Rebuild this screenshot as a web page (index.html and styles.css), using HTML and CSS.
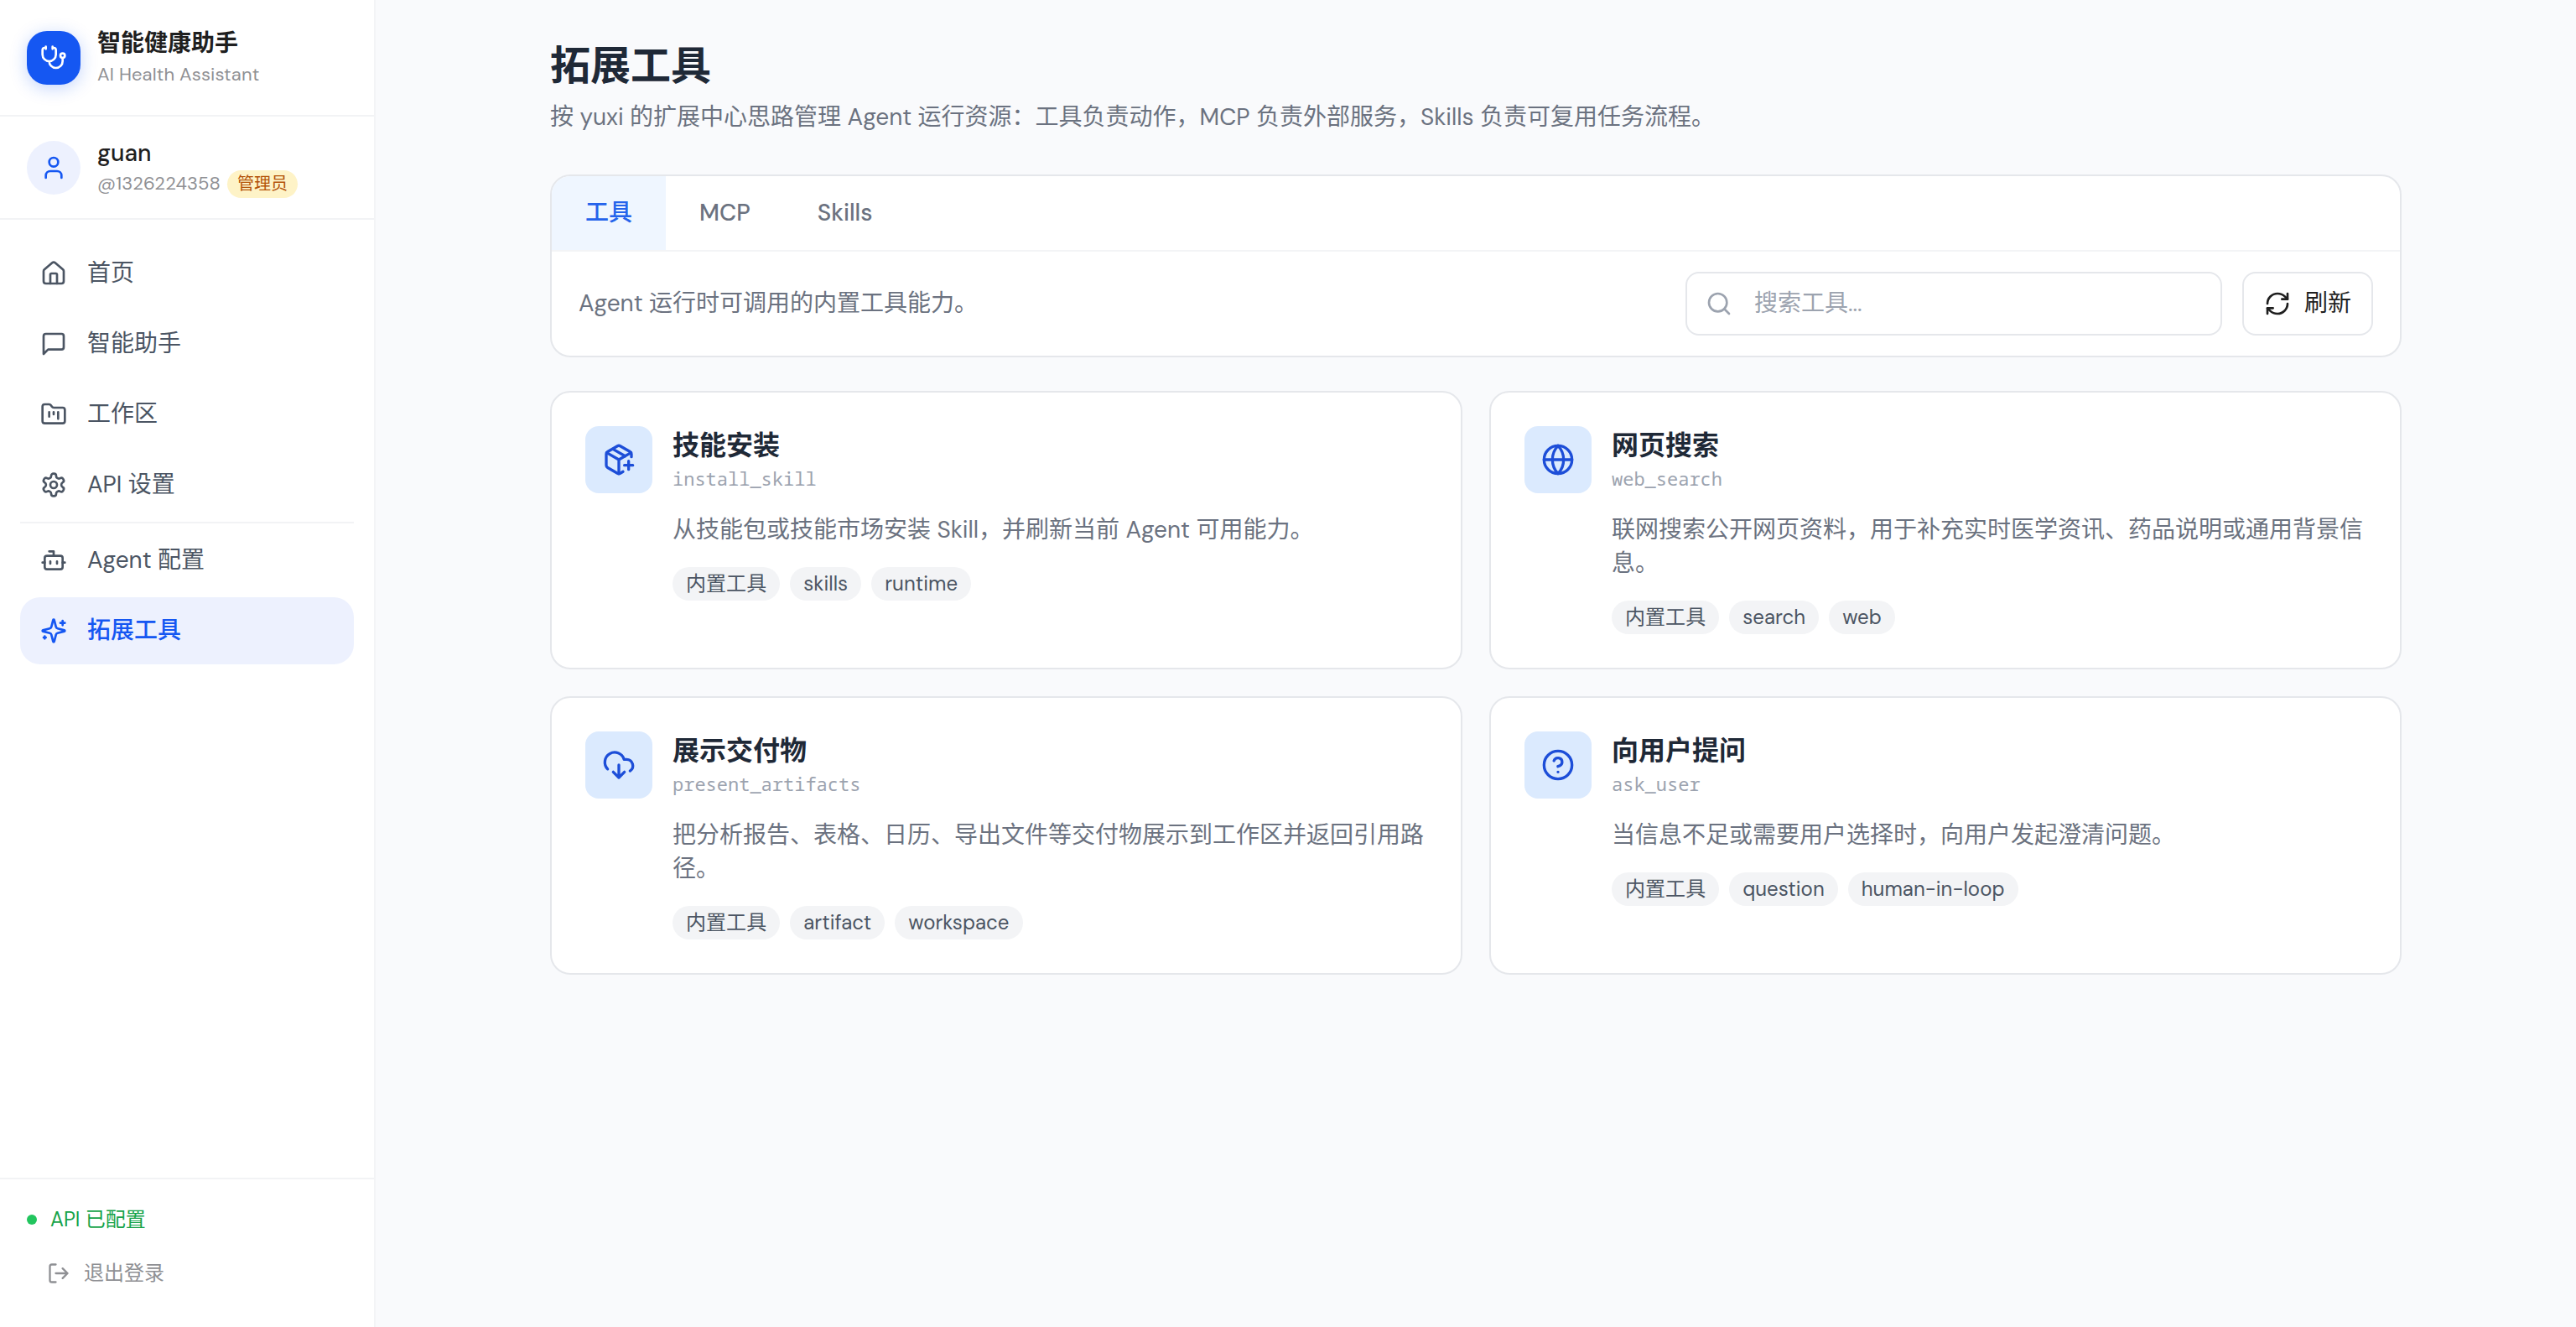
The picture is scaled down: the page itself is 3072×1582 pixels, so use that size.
FILE: index.html
```html
<!DOCTYPE html>
<html lang="zh-CN">
<head>
<meta charset="utf-8">
<title>拓展工具 - 智能健康助手</title>
<link rel="stylesheet" href="styles.css">
</head>
<body>
<div class="app">
  <aside class="sidebar">
    <header class="brand">
      <div class="brand-logo">
        <svg class="icon" viewBox="0 0 24 24"><path d="M11 2v2M5 2v2M5 3H4a2 2 0 0 0-2 2v4a6 6 0 0 0 12 0V5a2 2 0 0 0-2-2h-1M8 15a6 6 0 0 0 12 0v-3"/><circle cx="20" cy="10" r="2"/></svg>
      </div>
      <div class="brand-text">
        <div class="brand-name">智能健康助手</div>
        <div class="brand-sub">AI Health Assistant</div>
      </div>
    </header>
    <section class="user">
      <div class="avatar">
        <svg class="icon" viewBox="0 0 24 24"><path d="M19 21v-2a4 4 0 0 0-4-4H9a4 4 0 0 0-4 4v2"/><circle cx="12" cy="7" r="4"/></svg>
      </div>
      <div>
        <div class="user-name">guan</div>
        <div class="user-meta"><span>@1326224358</span><span class="role">管理员</span></div>
      </div>
    </section>
    <nav class="nav">
      <a class="nav-item"><svg class="icon" viewBox="0 0 24 24"><path d="M15 21v-8a1 1 0 0 0-1-1h-4a1 1 0 0 0-1 1v8"/><path d="M3 10a2 2 0 0 1 .709-1.528l7-5.999a2 2 0 0 1 2.582 0l7 5.999A2 2 0 0 1 21 10v9a2 2 0 0 1-2 2H5a2 2 0 0 1-2-2z"/></svg>首页</a>
      <a class="nav-item"><svg class="icon" viewBox="0 0 24 24"><path d="M21 15a2 2 0 0 1-2 2H7l-4 4V5a2 2 0 0 1 2-2h14a2 2 0 0 1 2 2z"/></svg>智能助手</a>
      <a class="nav-item"><svg class="icon" viewBox="0 0 24 24"><path d="M4 20h16a2 2 0 0 0 2-2V8a2 2 0 0 0-2-2h-7.93a2 2 0 0 1-1.66-.9l-.82-1.2A2 2 0 0 0 7.93 3H4a2 2 0 0 0-2 2v13c0 1.1.9 2 2 2ZM8 10v4M12 10v2M16 10v6"/></svg>工作区</a>
      <a class="nav-item"><svg class="icon" viewBox="0 0 24 24"><path d="M12.22 2h-.44a2 2 0 0 0-2 2v.18a2 2 0 0 1-1 1.73l-.43.25a2 2 0 0 1-2 0l-.15-.08a2 2 0 0 0-2.73.73l-.22.38a2 2 0 0 0 .73 2.73l.15.1a2 2 0 0 1 1 1.72v.51a2 2 0 0 1-1 1.74l-.15.09a2 2 0 0 0-.73 2.73l.22.38a2 2 0 0 0 2.73.73l.15-.08a2 2 0 0 1 2 0l.43.25a2 2 0 0 1 1 1.73V20a2 2 0 0 0 2 2h.44a2 2 0 0 0 2-2v-.18a2 2 0 0 1 1-1.73l.43-.25a2 2 0 0 1 2 0l.15.08a2 2 0 0 0 2.73-.73l.22-.39a2 2 0 0 0-.73-2.73l-.15-.08a2 2 0 0 1-1-1.74v-.5a2 2 0 0 1 1-1.74l.15-.09a2 2 0 0 0 .73-2.73l-.22-.38a2 2 0 0 0-2.73-.73l-.15.08a2 2 0 0 1-2 0l-.43-.25a2 2 0 0 1-1-1.73V4a2 2 0 0 0-2-2z"/><circle cx="12" cy="12" r="3"/></svg>API 设置</a>
      <hr class="nav-divider">
      <a class="nav-item"><svg class="icon" viewBox="0 0 24 24"><path d="M12 8V4H8"/><rect x="4" y="8" width="16" height="12" rx="2"/><path d="M2 14h2M20 14h2M15 13v2M9 13v2"/></svg>Agent 配置</a>
      <a class="nav-item active"><svg class="icon" viewBox="0 0 24 24"><path d="M9.937 15.5A2 2 0 0 0 8.5 14.063l-6.135-1.582a.5.5 0 0 1 0-.962L8.5 9.936A2 2 0 0 0 9.937 8.5l1.582-6.135a.5.5 0 0 1 .963 0L14.063 8.5A2 2 0 0 0 15.5 9.937l6.135 1.581a.5.5 0 0 1 0 .964L15.5 14.063a2 2 0 0 0-1.437 1.437l-1.582 6.135a.5.5 0 0 1-.963 0zM20 3v4M22 5h-4M4 17v2M5 18H3"/></svg>拓展工具</a>
    </nav>
    <footer class="side-footer">
      <div class="api-status"><i class="dot"></i>API 已配置</div>
      <button class="logout"><svg class="icon" viewBox="0 0 24 24"><path d="M9 21H5a2 2 0 0 1-2-2V5a2 2 0 0 1 2-2h4M16 17l5-5-5-5M21 12H9"/></svg>退出登录</button>
    </footer>
  </aside>

  <main class="main">
    <div class="content">
      <h1 class="page-title">拓展工具</h1>
      <p class="page-desc">按 yuxi 的扩展中心思路管理 Agent 运行资源：工具负责动作，MCP 负责外部服务，Skills 负责可复用任务流程。</p>

      <section class="panel">
        <div class="tabs">
          <button class="tab active">工具</button>
          <button class="tab">MCP</button>
          <button class="tab">Skills</button>
        </div>
        <div class="toolbar">
          <span class="toolbar-text">Agent 运行时可调用的内置工具能力。</span>
          <label class="search">
            <svg class="icon" viewBox="0 0 24 24"><circle cx="11" cy="11" r="8"/><path d="m21 21-4.3-4.3"/></svg>
            <input class="search-input" type="text" placeholder="搜索工具...">
          </label>
          <button class="refresh"><svg class="icon" viewBox="0 0 24 24"><path d="M3 12a9 9 0 0 1 9-9 9.75 9.75 0 0 1 6.74 2.74L21 8"/><path d="M21 3v5h-5"/><path d="M21 12a9 9 0 0 1-9 9 9.75 9.75 0 0 1-6.74-2.74L3 16"/><path d="M8 16H3v5"/></svg>刷新</button>
        </div>
      </section>

      <section class="cards">
        <article class="card">
          <div class="card-icon"><svg class="icon" viewBox="0 0 24 24"><path d="M16 16h6M19 13v6M21 10V8a2 2 0 0 0-1-1.73l-7-4a2 2 0 0 0-2 0l-7 4A2 2 0 0 0 3 8v8a2 2 0 0 0 1 1.73l7 4a2 2 0 0 0 2 0l2-1.14M7.5 4.27l9 5.15"/><path d="M3.29 7 12 12l8.71-5M12 22V12"/></svg></div>
          <div class="card-body">
            <h2 class="card-title">技能安装</h2>
            <div class="card-id">install_skill</div>
            <p class="card-desc">从技能包或技能市场安装 Skill，并刷新当前 Agent 可用能力。</p>
            <div class="tags"><span class="tag">内置工具</span><span class="tag">skills</span><span class="tag">runtime</span></div>
          </div>
        </article>
        <article class="card">
          <div class="card-icon"><svg class="icon" viewBox="0 0 24 24"><circle cx="12" cy="12" r="10"/><path d="M12 2a14.5 14.5 0 0 0 0 20 14.5 14.5 0 0 0 0-20M2 12h20"/></svg></div>
          <div class="card-body">
            <h2 class="card-title">网页搜索</h2>
            <div class="card-id">web_search</div>
            <p class="card-desc">联网搜索公开网页资料，用于补充实时医学资讯、药品说明或通用背景信息。</p>
            <div class="tags"><span class="tag">内置工具</span><span class="tag">search</span><span class="tag">web</span></div>
          </div>
        </article>
        <article class="card">
          <div class="card-icon"><svg class="icon" viewBox="0 0 24 24"><path d="M4 14.899A7 7 0 1 1 15.71 8h1.79a4.5 4.5 0 0 1 2.5 8.242M12 12v9M8 17l4 4 4-4"/></svg></div>
          <div class="card-body">
            <h2 class="card-title">展示交付物</h2>
            <div class="card-id">present_artifacts</div>
            <p class="card-desc">把分析报告、表格、日历、导出文件等交付物展示到工作区并返回引用路径。</p>
            <div class="tags"><span class="tag">内置工具</span><span class="tag">artifact</span><span class="tag">workspace</span></div>
          </div>
        </article>
        <article class="card">
          <div class="card-icon"><svg class="icon" viewBox="0 0 24 24"><circle cx="12" cy="12" r="10"/><path d="M9.09 9a3 3 0 0 1 5.83 1c0 2-3 3-3 3M12 17h.01"/></svg></div>
          <div class="card-body">
            <h2 class="card-title">向用户提问</h2>
            <div class="card-id">ask_user</div>
            <p class="card-desc">当信息不足或需要用户选择时，向用户发起澄清问题。</p>
            <div class="tags"><span class="tag">内置工具</span><span class="tag">question</span><span class="tag">human-in-loop</span></div>
          </div>
        </article>
      </section>
    </div>
  </main>
</div>
</body>
</html>
```
FILE: styles.css
```css
* {
  box-sizing: border-box;
  margin: 0;
  padding: 0;
}

body {
  font-family: "DM Sans", "Noto Sans CJK SC", "Inter", sans-serif;
  font-size: 28px;
  line-height: 40px;
  color: #1f1f1f;
  background: #f9fafc;
}

button,
input {
  font: inherit;
  color: inherit;
  background: none;
  border: none;
  outline: none;
}

.icon {
  display: block;
  flex: none;
  width: 32px;
  height: 32px;
  fill: none;
  stroke: currentColor;
  stroke-width: 2;
  stroke-linecap: round;
  stroke-linejoin: round;
}

.app {
  display: flex;
  height: 100vh;
}

/* Sidebar */
.sidebar {
  display: flex;
  flex-direction: column;
  flex: none;
  width: 448px;
  background: #fff;
  border-right: 2px solid #f3f4f6;
}

.brand,
.user {
  display: flex;
  align-items: center;
  gap: 20px;
  border-bottom: 2px solid #f2f3f5;
}

.brand {
  height: 139px;
  padding: 0 32px;
}

.user {
  height: 123px;
  padding: 0 32px;
}

.brand-logo,
.avatar {
  display: grid;
  place-items: center;
  flex: none;
  width: 64px;
  height: 64px;
}

.brand-logo {
  color: #fff;
  background: #1557f2;
  border-radius: 24px;
  box-shadow: 0 4px 20px rgba(21, 87, 242, 0.25);
}

.avatar {
  color: #1557f2;
  background: #edf1fe;
  border-radius: 50%;
}

.brand-name {
  margin-bottom: 1px;
  font-weight: 700;
  line-height: 38px;
}

.brand-sub {
  font-size: 22px;
  line-height: 33px;
  letter-spacing: 0.1px;
  color: #8f9094;
}

.user-name {
  font-weight: 500;
  line-height: 39px;
}

.user-meta {
  display: flex;
  align-items: center;
  gap: 8px;
  font-size: 22px;
  line-height: 34px;
  letter-spacing: 0.1px;
  color: #8f9094;
}

.role {
  padding: 0 12px;
  font-size: 20px;
  line-height: 33px;
  letter-spacing: 0;
  color: #b45309;
  background: #fef3c7;
  border-radius: 17px;
}

.nav {
  display: flex;
  flex: 1;
  flex-direction: column;
  gap: 4px;
  padding: 24px;
}

.nav-item {
  display: flex;
  align-items: center;
  gap: 24px;
  height: 80px;
  padding: 0 24px;
  color: #4b5563;
  border-radius: 24px;
}

.nav-item.active {
  font-weight: 500;
  color: #1557f2;
  background: #edf1fe;
}

.nav-divider {
  height: 2px;
  background: #f2f3f5;
  border: none;
}

.side-footer {
  display: flex;
  flex-direction: column;
  align-items: flex-start;
  gap: 24px;
  padding: 32px 32px 40px;
  font-size: 24px;
  border-top: 2px solid #f2f3f5;
}

.api-status {
  display: flex;
  align-items: center;
  gap: 16px;
  height: 32px;
  color: #16a34a;
}

.dot {
  width: 12px;
  height: 12px;
  background: #22c55e;
  border-radius: 50%;
}

.logout {
  display: flex;
  align-items: center;
  gap: 16px;
  height: 48px;
  padding: 0 24px;
  color: #8f9094;
}

.logout .icon {
  width: 28px;
  height: 28px;
}

/* Page */
.main {
  flex: 1;
  padding: 48px;
}

.content {
  width: 2208px;
  margin: 0 auto;
}

.page-title {
  font-size: 48px;
  font-weight: 700;
  line-height: 62px;
  color: #1f2937;
}

.page-desc {
  margin-top: 10px;
  color: #6b7280;
}

.panel {
  margin-top: 48px;
  overflow: hidden;
  background: #fff;
  border: 2px solid #e5e7eb;
  border-radius: 24px;
}

.tabs {
  display: flex;
  border-bottom: 2px solid #f3f4f6;
}

.tab {
  height: 88px;
  padding: 0 40px;
  font-weight: 500;
  color: #6b7280;
}

.tab.active {
  color: #2563eb;
  background: #eff6ff;
}

.toolbar {
  display: flex;
  align-items: center;
  gap: 24px;
  padding: 24px 32px;
}

.toolbar-text {
  flex: 1;
  color: #6b7280;
}

.search,
.refresh {
  display: flex;
  align-items: center;
  height: 76px;
  border: 2px solid #e5e7eb;
  border-radius: 16px;
}

.search {
  gap: 26px;
  width: 640px;
  padding: 0 22px;
  color: #9ca3af;
}

.search-input {
  flex: 1;
  min-width: 0;
  height: 40px;
}

.search-input::placeholder {
  color: #9ca3af;
  opacity: 1;
}

.refresh {
  gap: 16px;
  padding: 0 24px;
}

/* Tool cards */
.cards {
  display: grid;
  grid-template-columns: 1fr 1fr;
  gap: 32px;
  margin-top: 40px;
}

.card {
  display: flex;
  gap: 24px;
  padding: 40px;
  background: #fff;
  border: 2px solid #e5e7eb;
  border-radius: 24px;
}

.card-icon {
  display: grid;
  place-items: center;
  flex: none;
  width: 80px;
  height: 80px;
  color: #1d4ed8;
  background: #dbeafe;
  border-radius: 16px;
}

.card-icon .icon {
  width: 40px;
  height: 40px;
}

.card-body {
  flex: 1;
  min-width: 0;
}

.card-title {
  font-size: 32px;
  font-weight: 700;
  line-height: 46px;
  color: #1f2937;
}

.card-id {
  font-family: "Noto Sans Mono", "DejaVu Sans Mono", monospace;
  font-size: 22px;
  line-height: 33px;
  color: #9ca3af;
}

.card-desc {
  margin-top: 25px;
  color: #6b7280;
}

.tags {
  display: flex;
  gap: 12px;
  margin-top: 24px;
}

.tag {
  padding: 0 16px;
  font-size: 24px;
  letter-spacing: 0.05px;
  color: #4b5563;
  background: #f3f4f6;
  border-radius: 20px;
}
```
